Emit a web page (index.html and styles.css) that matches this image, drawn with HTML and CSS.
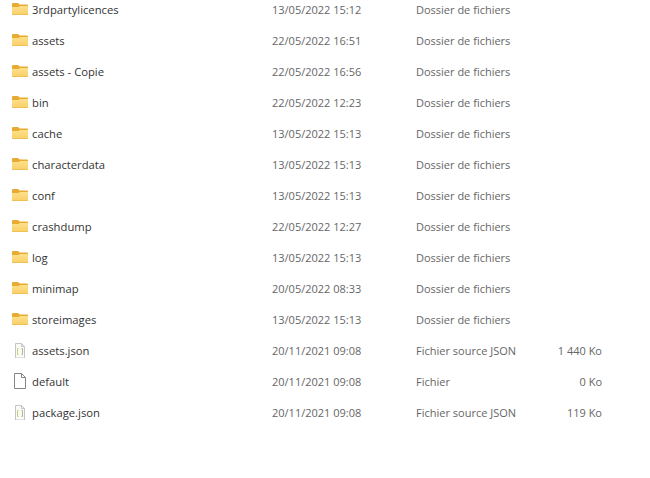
FILE: index.html
```html
<!DOCTYPE html>
<html lang="fr">
<head>
  <meta charset="UTF-8">
  <meta name="viewport" content="width=device-width, initial-scale=1.0">
  <title>Explorateur de fichiers</title>
  <link rel="stylesheet" href="styles.css">
</head>
<body>
  <svg class="defs" width="0" height="0">
    <defs>
      <linearGradient id="folder-front" x1="0" y1="0" x2="0" y2="1">
        <stop offset="0" stop-color="#fde08a"/>
        <stop offset="1" stop-color="#f9cf68"/>
      </linearGradient>
      <symbol id="folder" viewBox="0 -1 16 16">
        <path d="M0 2a1 1 0 0 1 1-1h5l1.600 1.500h7.400a1 1 0 0 1 1 1v2h-16z" fill="#e6ab30"/>
        <path d="M0 5h6.500l1.500-1h8v8a1 1 0 0 1-1 1h-14a1 1 0 0 1-1-1z" fill="url(#folder-front)"/>
        <path d="M0 12.300h16v.2a.5.5 0 0 1-.5.500h-15a.5.5 0 0 1-.5-.5z" fill="#eebb4c"/>
      </symbol>
      <symbol id="file" viewBox="0 0 16 16">
        <path d="M2.500 .5h7l4 4v11h-11z" fill="#fff" stroke="#858585"/>
        <path d="M9.500 .5v4h4" fill="none" stroke="#858585"/>
      </symbol>
      <symbol id="json" viewBox="0 -1 16 16">
        <path d="M3.500 .5h6l3 3v11.500h-9z" fill="#fbfbf6" stroke="#c4c4c4"/>
        <path d="M9.500 .5v3h3" fill="none" stroke="#c4c4c4"/>
        <path d="M6.500 5.500h-1v6h1" fill="none" stroke="#c9cf7e"/>
        <path d="M9.500 5.500h1v6h-1" fill="none" stroke="#a9b58f"/>
      </symbol>
    </defs>
  </svg>

  <div class="file-list">
    <div class="name"><svg class="icon"><use href="#folder"/></svg>3rdpartylicences</div>
    <div>13/05/2022 15:12</div>
    <div>Dossier de fichiers</div>
    <div class="size"></div>

    <div class="name"><svg class="icon"><use href="#folder"/></svg>assets</div>
    <div>22/05/2022 16:51</div>
    <div>Dossier de fichiers</div>
    <div class="size"></div>

    <div class="name"><svg class="icon"><use href="#folder"/></svg>assets - Copie</div>
    <div>22/05/2022 16:56</div>
    <div>Dossier de fichiers</div>
    <div class="size"></div>

    <div class="name"><svg class="icon"><use href="#folder"/></svg>bin</div>
    <div>22/05/2022 12:23</div>
    <div>Dossier de fichiers</div>
    <div class="size"></div>

    <div class="name"><svg class="icon"><use href="#folder"/></svg>cache</div>
    <div>13/05/2022 15:13</div>
    <div>Dossier de fichiers</div>
    <div class="size"></div>

    <div class="name"><svg class="icon"><use href="#folder"/></svg>characterdata</div>
    <div>13/05/2022 15:13</div>
    <div>Dossier de fichiers</div>
    <div class="size"></div>

    <div class="name"><svg class="icon"><use href="#folder"/></svg>conf</div>
    <div>13/05/2022 15:13</div>
    <div>Dossier de fichiers</div>
    <div class="size"></div>

    <div class="name"><svg class="icon"><use href="#folder"/></svg>crashdump</div>
    <div>22/05/2022 12:27</div>
    <div>Dossier de fichiers</div>
    <div class="size"></div>

    <div class="name"><svg class="icon"><use href="#folder"/></svg>log</div>
    <div>13/05/2022 15:13</div>
    <div>Dossier de fichiers</div>
    <div class="size"></div>

    <div class="name"><svg class="icon"><use href="#folder"/></svg>minimap</div>
    <div>20/05/2022 08:33</div>
    <div>Dossier de fichiers</div>
    <div class="size"></div>

    <div class="name"><svg class="icon"><use href="#folder"/></svg>storeimages</div>
    <div>13/05/2022 15:13</div>
    <div>Dossier de fichiers</div>
    <div class="size"></div>

    <div class="name"><svg class="icon"><use href="#json"/></svg>assets.json</div>
    <div>20/11/2021 09:08</div>
    <div>Fichier source JSON</div>
    <div class="size">1 440 Ko</div>

    <div class="name"><svg class="icon"><use href="#file"/></svg>default</div>
    <div>20/11/2021 09:08</div>
    <div>Fichier</div>
    <div class="size">0 Ko</div>

    <div class="name"><svg class="icon"><use href="#json"/></svg>package.json</div>
    <div>20/11/2021 09:08</div>
    <div>Fichier source JSON</div>
    <div class="size">119 Ko</div>
  </div>
</body>
</html>
```

FILE: styles.css
```css
body {
  margin: 0;
  background: #fff;
  color: #666;
  font-family: "Open Sans", sans-serif;
  font-size: 11px;
}
.defs {
  display: block;
}
.file-list {
  display: grid;
  grid-template-columns: 260px 144px 132px 54px;
  grid-auto-rows: 18px;
  row-gap: 13px;
  align-items: center;
  padding-left: 12px;
}
.name {
  display: flex;
  align-items: center;
  gap: 4px;
  color: #333;
  font-size: 11.25px;
}
.icon {
  width: 16px;
  height: 16px;
}
.size {
  text-align: right;
}
```
